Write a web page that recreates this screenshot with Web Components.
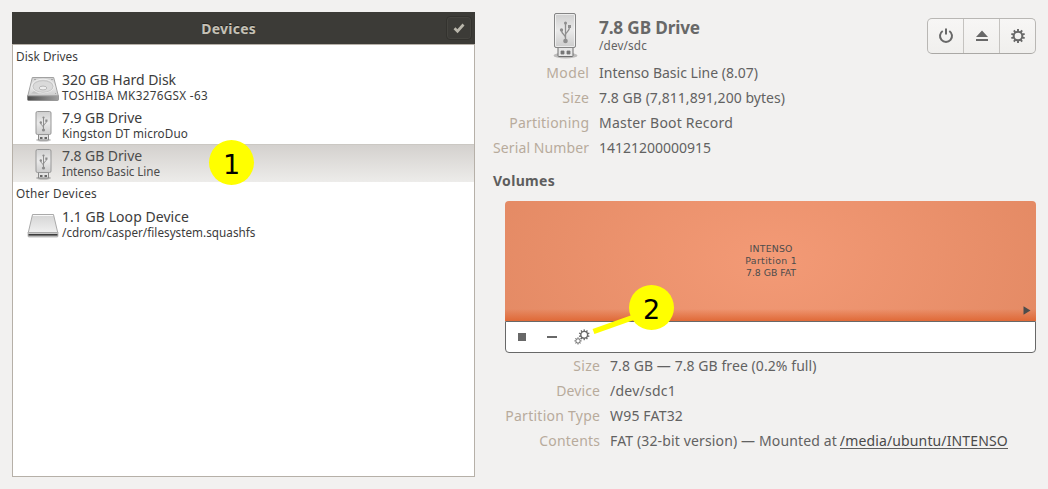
<!DOCTYPE html>
<html lang="en"><head><meta charset="utf-8"><title>Disks</title>
<style>
html,body{margin:0;height:100%;overflow:hidden}
body{background:#f2f1f0;font-family:"Noto Sans",sans-serif;color:#4c4c4c}
</style></head><body>
<disks-window></disks-window>
<script>
function define(name, html, after) {
  customElements.define(name, class extends HTMLElement {
    connectedCallback() {
      if (this.shadowRoot) return;
      const t = document.createElement('template');
      t.innerHTML = typeof html === 'function' ? html(this) : html;
      this.attachShadow({mode: 'open'}).append(t.content.cloneNode(true));
      if (after) after(this);
    }
  });
}
/* A line of text tracked so that it takes the width given in "w". */
define('ui-text', '<style>:host{display:block;white-space:pre}span{display:inline-block}</style><span><slot></slot></span>', el => {
  const s = el.shadowRoot.querySelector('span');
  const w = +el.getAttribute('w'), n = el.textContent.length;
  if (!w) return;
  const d = (w - s.getBoundingClientRect().width) / n;
  s.style.letterSpacing = d.toFixed(4) + 'px';
  s.style.marginRight = (-d).toFixed(4) + 'px';
});
const shade = `<ellipse cx="16.5" cy="42.5" rx="12" ry="3" fill="#000" opacity=".22"/>`;
const usb = `${shade}
<path d="M9 33.500h15v9a1 1 0 0 1-1 1H10a1 1 0 0 1-1-1z" fill="#e6e6e6" stroke="#6f6f6f"/>
<path d="M12 38h3v3h-3zM18 38h3v3h-3z" fill="#777" stroke="#777" stroke-width=".8"/>
<rect x="5.500" y=".5" width="21" height="34" rx="1.500" fill="url(#g)" stroke="#858585"/>
<rect x="6.500" y="1.500" width="19" height="32" rx="1" fill="none" stroke="#fff" opacity=".6"/>
<g fill="none" stroke="#8e8e8e" stroke-width="1.300"><path d="M16.500 28V10M16.500 25c0-4-4-3-4-8M16.500 22c0-3 4-3 4-8"/></g>
<g fill="#8e8e8e"><circle cx="16.500" cy="28" r="2.300"/><circle cx="16.500" cy="10" r="1.500"/><circle cx="12.500" cy="17" r="1.700"/><rect x="19" y="12" width="3" height="3"/></g>`;
const usbSmall = `<ellipse cx="9.500" cy="29" rx="7.500" ry="1.800" fill="#000" opacity=".22"/>
<path d="M4.500 22.500h10v6.500h-10z" fill="#e2e2e2" stroke="#8a8a8a"/><path d="M6 26h2.500v2H6zM10.500 26h2.500v2h-2.500z" fill="#666"/>
<rect x="2" y=".5" width="15" height="23" rx="1.500" fill="url(#g)" stroke="#979797"/>
<path d="M9.500 19V7M9.500 17c0-3-2.700-2-2.700-5M9.500 15c0-2 2.900-2 2.900-5" fill="none" stroke="#8e8e8e"/>
<g fill="#8a8a8a"><circle cx="9.500" cy="19" r="1.600"/><circle cx="9.500" cy="6.500" r="1.100"/><circle cx="6.800" cy="11.500" r="1.200"/><path d="M11.300 8.500h2.200v2.200h-2.200z"/></g>`;
const defs = '<defs><linearGradient id="g" x2="0" y2="1"><stop stop-color="#cfcfcf"/><stop offset=".5" stop-color="#eaeaea"/><stop offset="1" stop-color="#cccccc"/></linearGradient><linearGradient id="h" x2="0" y2="1"><stop stop-color="#d4d4d4"/><stop offset="1" stop-color="#f0f0f0"/></linearGradient><linearGradient id="k"><stop stop-color="#4c4c4c"/><stop offset="1" stop-color="#a0a0a0"/></linearGradient></defs>';
function gear(cx, cy, r, n, hole, tooth, rim) {
  let t = '';
  for (let i = 0; i < n; i++) t += `<rect x="${cx - tooth/2}" y="${cy - r}" width="${tooth}" height="${r - hole - rim/2}" transform="rotate(${i*360/n} ${cx} ${cy})"/>`;
  return `<g fill="currentColor">${t}</g><circle cx="${cx}" cy="${cy}" r="${hole + rim/2}" fill="none" stroke="currentColor" stroke-width="${rim}"/>`;
}
const icons = {
  usb: ['0 0 33 46', usb],
  usbsmall: ['0 0 19 31', usbSmall],
  hdd: ['0 0 32 25', `<path d="M.5 19.500h31v4a1 1 0 0 1-1 1H1.500a1 1 0 0 1-1-1z" fill="url(#k)" stroke="#777" stroke-width=".6"/>
   <path d="M5.300 1.500h21.400l4.600 18.300H.8z" fill="url(#g)" stroke="#a2a2a2"/>
   <ellipse cx="16" cy="10" rx="11" ry="6.800" fill="#d6d6d6" stroke="#f4f4f4" stroke-width=".8"/><ellipse cx="16" cy="10.500" rx="10" ry="5.800" fill="#dadada" stroke="#bcbcbc" stroke-width=".7"/><ellipse cx="16" cy="12" rx="3.800" ry="1.900" fill="#eee" stroke="#aaa" stroke-width=".8"/><path d="M4 17.500l8 .5-5-3z" fill="#c2c2c2"/><path d="M7 3.500h2M24 3.500h2M28 17.500h1" stroke="#aaa"/>`],
  disk: ['0 0 32 25', `<path d="M1 19h30v4a1 1 0 0 1-1 1H2a1 1 0 0 1-1-1z" fill="#c8c8c8" stroke="#999" stroke-width=".6"/><path d="M1.500 21.800h29" stroke="#3d3d3d" stroke-width="1.600"/><path d="M5.500 1.500h21l4.200 18H1.300z" fill="url(#h)" stroke="#aaa"/><path d="M6 2.500h20" stroke="#f8f8f8"/>`],
  check: ['0 0 12 12', '<path d="M1.500 6.300l3 2.900L10.500 2.500" fill="none" stroke="currentColor" stroke-width="2.700"/>'],
  power: ['0 0 16 16', '<path d="M4.700 3a6 6 0 1 0 6.600 0" fill="none" stroke="currentColor" stroke-width="2"/><path d="M8 .5v6" stroke="currentColor" stroke-width="2"/>'],
  eject: ['0 0 14 14', '<path d="M7 1.500L13 8H1zM1 10h12v2H1z" fill="currentColor"/>'],
  gear: ['0 0 16 16', gear(8, 8, 7, 10, 3.300, 1.900, 2)],
  gears: ['0 0 16 16', gear(10.200, 5.800, 5.400, 10, 2.700, 1.300, 1.400) + gear(4, 11.900, 3.600, 8, 1.700, 1, .8)],
  stop: ['0 0 8 8', '<path d="M0 0h8v8H0z" fill="currentColor"/>'],
  minus: ['0 0 10 2', '<path d="M0 0h10v2H0z" fill="currentColor"/>'],
  play: ['0 0 8 9', '<path d="M.5 .3l7 4.200-7 4.200z" fill="currentColor"/>']
};
define('ui-icon', el => {
  const [vb, body] = icons[el.getAttribute('name')];
  return `<style>:host{display:block;flex:none}svg{display:block}</style><svg viewBox="${vb}" width="${el.getAttribute('width')}" height="${el.getAttribute('height')}">${defs}${body}</svg>`;
});
define('device-row', el => `<style>
:host{display:grid;grid-template-columns:49px 1fr;height:38px;box-sizing:border-box;color:#3c3c3c}
:host([selected]){background:linear-gradient(#d3d0cd,#edecea);box-shadow:inset 0 1px #cbc8c3;color:#4c4c4c}
.i{display:grid;place-items:center;padding:2px 0 0 11px}
.n{font-size:14px;line-height:18px;padding-top:3px}.s{font-size:11.700px;line-height:14px;margin-top:-1px}
</style><div class="i"><slot name="icon"></slot></div><div><div class="n"><slot name="name"></slot></div><div class="s"><slot name="sub"></slot></div></div>`);
define('device-panel', `<style>
:host{display:flex;flex-direction:column;width:463px;height:465px;box-sizing:border-box}
header{height:32px;background:#3c3b37;color:#c5c1b6;display:grid;grid-template-columns:1fr 30px;align-items:center;font-weight:700;font-size:14px;box-sizing:border-box}
header ui-text{justify-self:center;text-shadow:0 -1px #22211e}
.b{width:24px;height:22px;border:1px solid #33322e;border-radius:4px;box-shadow:inset 0 0 0 1px #45443f;display:grid;place-items:center;color:#b9b6ab;margin-left:1px}
main{flex:1;border:1px solid #b6b0a8;background:#fff}
h3{margin:0;height:23px;line-height:23px;padding-left:3px;font-weight:400;font-size:11.800px;color:#3c3c3c}
</style><header><ui-text w="55">Devices</ui-text><div class="b"><ui-icon name="check" width="12" height="12"></ui-icon></div></header>
<main><h3><ui-text w="62">Disk Drives</ui-text></h3>
<device-row><ui-icon slot="icon" name="hdd" width="32" height="25"></ui-icon><ui-text slot="name" w="114">320 GB Hard Disk</ui-text><ui-text slot="sub" w="146">TOSHIBA MK3276GSX -63</ui-text></device-row>
<device-row><ui-icon slot="icon" name="usbsmall" width="19" height="31"></ui-icon><ui-text slot="name" w="80">7.9 GB Drive</ui-text><ui-text slot="sub" w="126">Kingston DT microDuo</ui-text></device-row>
<device-row selected><ui-icon slot="icon" name="usbsmall" width="19" height="31"></ui-icon><ui-text slot="name" w="80">7.8 GB Drive</ui-text><ui-text slot="sub" w="98">Intenso Basic Line</ui-text></device-row>
<h3><ui-text w="81">Other Devices</ui-text></h3>
<device-row><ui-icon slot="icon" name="disk" width="32" height="25"></ui-icon><ui-text slot="name" w="127">1.1 GB Loop Device</ui-text><ui-text slot="sub" w="193.500">/cdrom/casper/filesystem.squashfs</ui-text></device-row>
</main>`);
define('info-row', `<style>:host{display:grid;grid-template-columns:var(--label,96px) 1fr;column-gap:10px;height:25px;line-height:25px;font-size:14px;color:#626262}
.l{justify-self:end;color:#b8ab9c}.v{display:flex;gap:3px}</style><div class="l"><slot name="label"></slot></div><div class="v"><slot></slot></div>`);
define('drive-header', `<style>
:host{display:flex;height:48px;align-items:flex-start}
.i{width:106px;display:flex;justify-content:flex-end;box-sizing:border-box;padding:1px 17px 0 0}
.t{flex:1;padding-top:4px;color:#626262}.n{font-size:17.200px;line-height:23px;font-weight:700;color:#686868}.s{font-size:11.700px;line-height:13px}
.b{display:flex;margin:6px 0 0;height:36px;width:109px;box-sizing:border-box;border:1px solid #b9b7b4;border-bottom-color:#aaa8a5;border-radius:5px;background:linear-gradient(#f7f6f5,#f0efed);color:#686868}
.b div{flex:1;display:grid;place-items:center}.b div+div{border-left:1px solid #c5c3c0}
</style><div class="i"><ui-icon name="usb" width="33" height="46"></ui-icon></div>
<div class="t"><div class="n"><ui-text w="101">7.8 GB Drive</ui-text></div><div class="s"><ui-text w="48">/dev/sdc</ui-text></div></div>
<div class="b"><div><ui-icon name="power" width="16" height="16"></ui-icon></div><div><ui-icon name="eject" width="14" height="14"></ui-icon></div><div><ui-icon name="gear" width="16" height="16"></ui-icon></div></div>`);
define('volume-map', `<style>
:host{display:flex;flex-direction:column;height:152px;width:531px;box-sizing:border-box}
.p{height:120px;border-radius:4px 4px 0 0;background:linear-gradient(#df663300 108px,#df6633 121px),radial-gradient(ellipse 330px 200px at 50% 50%,#f39a76,#e28862);display:grid;align-content:center;justify-items:center;position:relative;font:9.330px/12px "DejaVu Sans",sans-serif;color:#4c4c4c}
.p ui-text{position:relative;left:.5px}
.p ui-icon{position:absolute;right:5px;bottom:6px;color:#4c4c4c}
.f{flex:1;background:#fff;border:1px solid #686868;border-radius:0 0 4px 4px;display:flex;align-items:center;color:#686868;padding-left:12px}
.f ui-icon+ui-icon{margin-left:21px}.f ui-icon:last-child{margin-left:17px}
</style><div class="p"><ui-text w="43">INTENSO</ui-text><ui-text w="52">Partition 1</ui-text><ui-text w="50">7.8 GB FAT</ui-text><ui-icon name="play" width="8" height="9"></ui-icon></div>
<div class="f"><ui-icon name="stop" width="8" height="8"></ui-icon><ui-icon name="minus" width="10" height="2"></ui-icon><ui-icon name="gears" width="16" height="16"></ui-icon></div>`);
define('drive-details', `<style>
:host{display:block;width:543px}
h2{margin:0;height:41px;line-height:41px;font-size:14px;color:#5e5e5e}
volume-map{margin-left:12px}.low{--label:107px}
a{color:#4a4a4a}a ui-text{box-shadow:0 1px #5e5e5e;height:20px;line-height:25px}
</style><drive-header></drive-header>
<info-row><ui-text slot="label" w="43">Model</ui-text><ui-text w="159">Intenso Basic Line (8.07)</ui-text></info-row>
<info-row><ui-text slot="label" w="27">Size</ui-text><ui-text w="186">7.8 GB (7,811,891,200 bytes)</ui-text></info-row>
<info-row><ui-text slot="label" w="80">Partitioning</ui-text><ui-text w="134">Master Boot Record</ui-text></info-row>
<info-row><ui-text slot="label" w="96">Serial Number</ui-text><ui-text w="112">14121200000915</ui-text></info-row>
<h2><ui-text w="62">Volumes</ui-text></h2>
<volume-map></volume-map>
<div class="low">
<info-row><ui-text slot="label" w="27">Size</ui-text><ui-text w="206.500">7.8 GB — 7.8 GB free (0.2% full)</ui-text></info-row>
<info-row><ui-text slot="label" w="44">Device</ui-text><ui-text w="66">/dev/sdc1</ui-text></info-row>
<info-row><ui-text slot="label" w="95">Partition Type</ui-text><ui-text w="73">W95 FAT32</ui-text></info-row>
<info-row><ui-text slot="label" w="61">Contents</ui-text><ui-text w="227">FAT (32-bit version) — Mounted at</ui-text><a><ui-text w="168">/media/ubuntu/INTENSO</ui-text></a></info-row>
</div>`);
define('step-badge', `<style>:host{position:absolute;width:45px;height:45px;border-radius:50%;background:#ff0;color:#000;display:grid;place-items:center;font:27px/45px "DejaVu Sans",sans-serif}span{display:block;padding-top:2px}</style><span><slot></slot></span>`);
define('disks-window', `<style>
:host{display:flex;gap:18px;padding:12px;box-sizing:border-box;width:1048px;height:489px;position:relative}
.one{left:209px;top:140px}.two{left:629px;top:285px}
.line{position:absolute;left:590px;top:300px}
</style><device-panel></device-panel><drive-details></drive-details>
<svg class="line" width="60" height="40"><path d="M3.500 31.500L50 15" stroke="#ff0" stroke-width="5.500"/></svg>
<step-badge class="one">1</step-badge><step-badge class="two">2</step-badge>`);
</script></body></html>
